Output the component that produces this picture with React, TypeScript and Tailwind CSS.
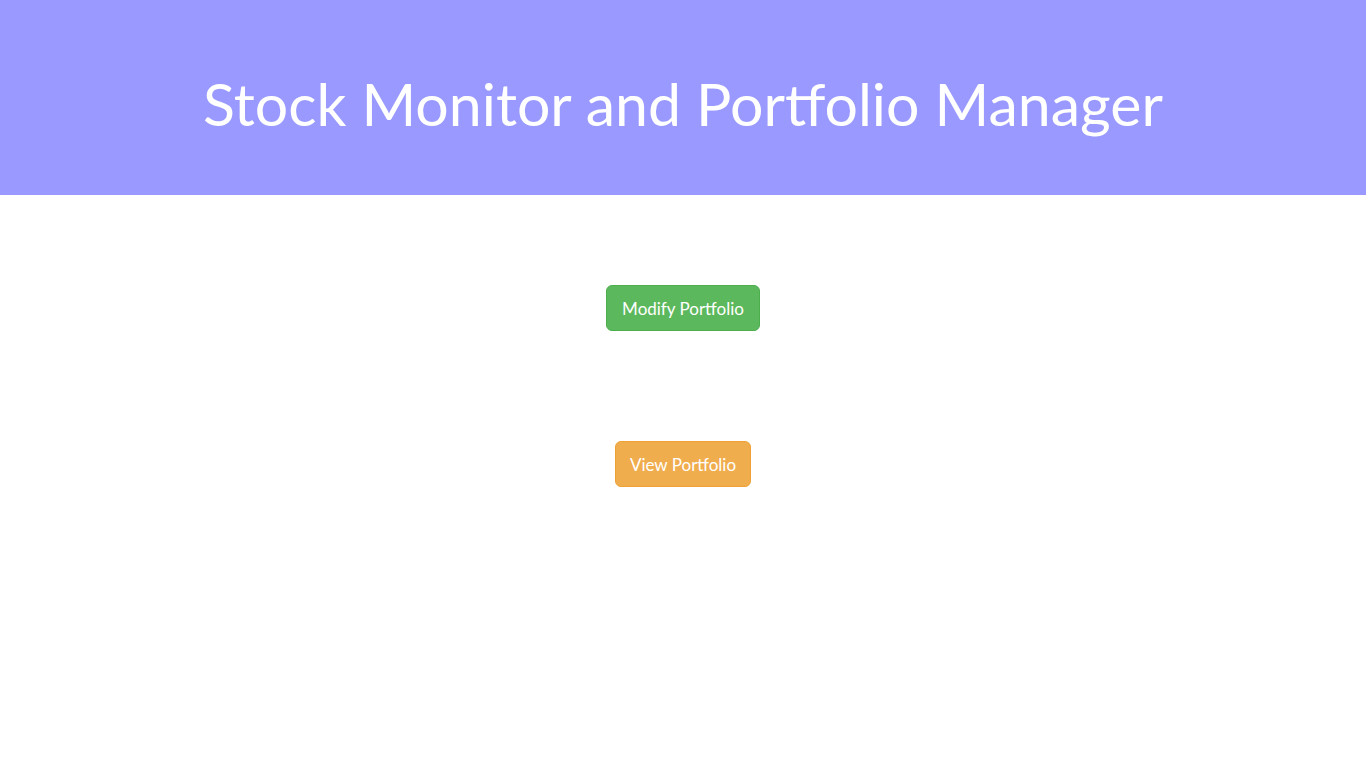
export default function App() {
  return (
    <div className="min-h-screen bg-white" style={{ fontFamily: "Lato, 'Open Sans', sans-serif" }}>
      <header className="h-[195px] bg-[#9999ff] flex items-center justify-center">
        <h1 className="text-white text-[59px] leading-none font-normal pt-[12px]">
          Stock Monitor and Portfolio Manager
        </h1>
      </header>
      <main className="flex flex-col items-center pt-[90px] gap-[110px]">
        <button className="w-[154px] h-[46px] rounded-[6px] bg-[#5cb85c] border border-[#4cae4c] text-white text-[17px] flex items-center justify-center pt-[2px]">
          Modify Portfolio
        </button>
        <button className="w-[136px] h-[46px] rounded-[6px] bg-[#f0ad4e] border border-[#eea236] text-white text-[17px] flex items-center justify-center pt-[2px]">
          View Portfolio
        </button>
      </main>
    </div>
  );
}
